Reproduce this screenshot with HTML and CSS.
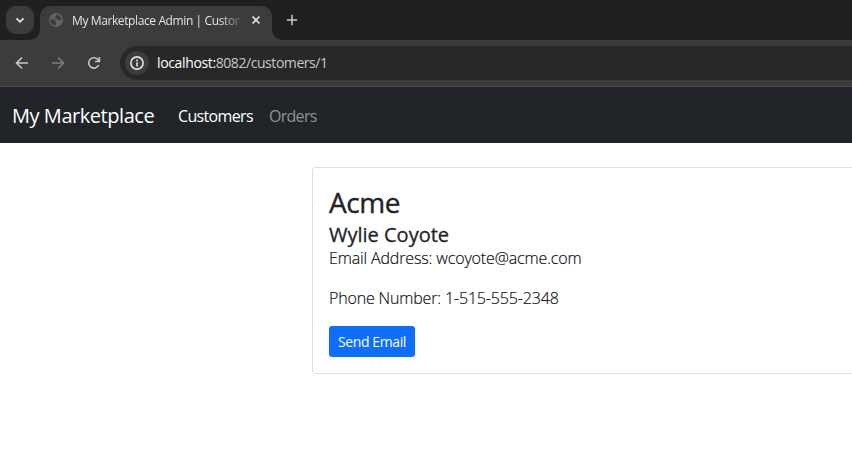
FILE: index.html
```html
<!DOCTYPE html>
<html lang="en">
<head>
<meta charset="utf-8">
<title>My Marketplace Admin | Customer</title>
<link rel="stylesheet" href="styles.css">
</head>
<body>
<header class="browser">
  <div class="tabstrip">
    <button class="tab-search" aria-label="Search tabs"><svg width="28" height="28" viewBox="0 0 28 28"><path d="M10.500 12.300l3.500 3.500 3.500-3.500" fill="none" stroke="#e3e3e3" stroke-width="1.800"/></svg></button>
    <div class="tab">
      <svg class="globe" width="14" height="14" viewBox="0 0 14 14"><circle cx="7" cy="7" r="7" fill="#5f6368"/><path d="M1.500 5.200C3 6.800 5 6.200 6 7.200c1 .9-.2 1.800.8 2.800.6.700 0 1.600-.8 2.300C3 12 1 9.500 1.500 5.200z M8.300 1.700C6.500 2.200 7.600 3.500 6.100 4c-.7.300-.6 1.300.3 1.300 1.500 0 1.700 1.300 3 1.400 1.200.1 1.700.8 2.900.4C12.500 4.500 10.700 2.300 8.300 1.700z" fill="#3c3c3c"/></svg>
      <span class="tab-title">My Marketplace Admin | Custom</span>
      <svg class="close" width="10" height="10" viewBox="0 0 10 10"><path d="M1.500 1.500l7 7M8.500 1.500l-7 7" stroke="#e3e3e3" stroke-width="1.600"/></svg>
    </div>
    <svg class="new-tab" width="12" height="12" viewBox="0 0 12 12"><path d="M6 .8v10.400M.8 6h10.400" stroke="#c7c7c7" stroke-width="1.500"/></svg>
  </div>
  <div class="toolbar">
    <svg class="nav-icon" width="16" height="16" viewBox="0 0 16 16"><path d="M14 8H3M8 2.500L2.500 8 8 13.500" fill="none" stroke="#c7c7c7" stroke-width="1.600"/></svg>
    <svg class="nav-icon" width="16" height="16" viewBox="0 0 16 16"><path d="M2 8h11M8 2.500L13.500 8 8 13.500" fill="none" stroke="#7c7c7c" stroke-width="1.600"/></svg>
    <svg class="nav-icon" width="16" height="16" viewBox="0 0 16 16"><path d="M12.700 10A5.200 5.200 0 1 1 12.200 5L13.200 6.200M13.400 2v4.500H9" fill="none" stroke="#c7c7c7" stroke-width="1.600"/></svg>
    <div class="omnibox">
      <span class="site-info"><svg width="14" height="14" viewBox="0 0 14 14"><circle cx="7" cy="7" r="6.100" fill="none" stroke="#e3e3e3" stroke-width="1.600"/><path d="M7 6.300v4.200M7 3.500v1.700" stroke="#e3e3e3" stroke-width="1.600"/></svg></span>
      <span class="url"><span class="host">localhost:</span>8082/customers/1</span>
    </div>
  </div>
</header>
<nav class="navbar">
  <a class="brand">My Marketplace</a>
  <a class="link active">Customers</a>
  <a class="link orders">Orders</a>
</nav>
<main class="page">
  <section class="card">
    <h3 class="company">Acme</h3>
    <h5 class="contact">Wylie Coyote</h5>
    <p class="detail email">Email Address: wcoyote@acme.com</p>
    <p class="detail phone">Phone Number: 1-515-555-2348</p>
    <button class="send">Send Email</button>
  </section>
</main>
</body>
</html>
```
FILE: styles.css
```css
* { box-sizing: border-box; }
body { margin: 0; height: 465px; overflow: hidden; background: #fff; color: #212529; font: 16px/24px "Open Sans", "Noto Sans", sans-serif; }
svg { display: block; flex: none; }
button { border: 0; padding: 0; font-family: inherit; }
.browser { background: #3c3c3c; height: 87px; border-bottom: 1px solid #4b4b4b; }
.tabstrip { height: 40px; background: #1f2120; display: flex; align-items: flex-start; padding: 6px 0 0 6px; }
.tab-search { width: 28px; height: 28px; border-radius: 10px; background: #3c3c3c; }
.tab { position: relative; width: 232px; height: 34px; margin-left: 6px; border-radius: 10px 10px 0 0; background: #3c3c3c; display: flex; align-items: flex-start; padding-left: 9px; }
.tab::before, .tab::after { content: ""; position: absolute; bottom: 0; width: 10px; height: 10px; }
.tab::before { left: -10px; background: radial-gradient(circle at 0 0, transparent 9.5px, #3c3c3c 10px); }
.tab::after { right: -10px; background: radial-gradient(circle at 100% 0, transparent 9.5px, #3c3c3c 10px); }
.globe { margin-top: 7px; }
.tab-title { width: 168px; height: 28px; margin-left: 9px; overflow: hidden; white-space: nowrap; font-size: 12px; line-height: 29px; letter-spacing: -.39px; color: #e3e3e3; mask-image: linear-gradient(to right, #000 148px, transparent 172px); }
.close { margin: 9px 0 0 11px; }
.new-tab { margin: 8px 0 0 14px; }
.toolbar { height: 46px; display: flex; align-items: center; padding-left: 14px; background: #3c3c3c; }
.nav-icon { margin-right: 20px; }
.omnibox { flex: 1; height: 34px; margin-left: -2px; border-radius: 17px 0 0 17px; background: #282828; display: flex; align-items: center; padding-left: 5px; }
.site-info { width: 24px; height: 24px; border-radius: 50%; background: #3c3c3c; display: grid; place-items: center; }
.url { margin-left: 8px; font-size: 14px; line-height: 20px; letter-spacing: -.44px; color: #c7c7c7; }
.host { color: #fff; letter-spacing: -.36px; }
.navbar { height: 56px; background: #212529; display: flex; align-items: center; padding: 1px 0 0 12px; color: #fff; }
.brand { width: 166px; font-size: 20px; line-height: 30px; letter-spacing: -.45px; white-space: nowrap; }
.link { width: 91px; letter-spacing: -.66px; }
.orders { color: #909294; letter-spacing: -.72px; }
.page { padding: 24px 0 0 312px; }
.card { height: 207px; border: 1px solid #dfdfdf; border-right: 0; border-radius: 4px 0 0 4px; padding: 18px 16px 16px; }
h3, h5, p { margin: 0; white-space: nowrap; }
.company { font-size: 28px; line-height: 33px; font-weight: 500; -webkit-text-stroke: .4px #212529; letter-spacing: -.4px; margin-bottom: 4px; }
.contact { font-size: 20px; line-height: 24px; font-weight: 500; -webkit-text-stroke: .3px #212529; letter-spacing: 0; }
.detail { font-weight: 300; color: #111417; -webkit-text-stroke: .2px #111417; letter-spacing: -.14px; margin-bottom: 16px; }
.detail.email { margin-top: -1px; }
.detail.phone { letter-spacing: -.16px; }
.send { display: block; width: 86px; height: 31px; border-radius: 3px; background: #0d6efd; color: #fff; font-size: 14px; line-height: 23px; letter-spacing: -.4px; white-space: nowrap; }
```
